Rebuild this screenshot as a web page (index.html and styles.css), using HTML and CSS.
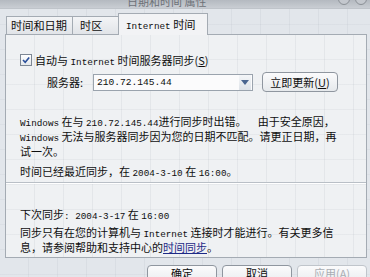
FILE: index.html
```html
<!DOCTYPE html>
<html lang="zh-CN">
<head>
    <meta charset="UTF-8">
    <meta name="viewport" content="width=device-width, initial-scale=1.0">
    <title>日期和时间 属性</title>
    <link rel="stylesheet" href="styles.css">
</head>
<body>
    <div class="window">
        <div class="titlebar">
            <span class="title">日期和时间 属性</span>
            <span class="title-btns">
                <span class="circle"></span>
                <span class="circle"></span>
            </span>
        </div>

        <div class="tabs">
            <div class="tab tab-date">时间和日期</div>
            <div class="tab tab-zone">时区</div>
            <div class="tab tab-active"><span class="en">Internet</span> 时间</div>
        </div>

        <div class="panel">
            <div class="row check-row">
                <span class="checkbox">
                    <svg width="10" height="10" viewBox="0 0 10 10"><path d="M2 5 L4.2 7.3 L8.2 2.4" fill="none" stroke="#2a4f9a" stroke-width="1.6"/></svg>
                </span>
                <span>自动与 <span class="en">Internet</span> 时间服务器同步(<u>S</u>)</span>
            </div>

            <div class="row server-row">
                <span class="label">服务器:</span>
                <div class="combo">
                    <span class="en combo-text">210.72.145.44</span>
                    <span class="combo-arrow">
                        <svg width="8" height="5" viewBox="0 0 8 5"><path d="M0 0 L8 0 L4 5 Z" fill="#4a6590"/></svg>
                    </span>
                </div>
                <button class="btn update-btn">立即更新(<u>U</u>)</button>
            </div>

            <p class="text error-text">
                <span class="en">Windows</span> 在与 <span class="en">210.72.145.44</span>进行同步时出错。<span class="en">&nbsp;&nbsp;</span>由于安全原因，<br>
                <span class="en">Windows</span> 无法与服务器同步因为您的日期不匹配。请更正日期，再<br>
                试一次。
            </p>

            <p class="text last-sync">时间已经最近同步，在 <span class="en">2004-3-10</span> 在 <span class="en">16:00</span>。</p>

            <div class="separator"></div>

            <p class="text next-sync">下次同步<span class="en">: 2004-3-17</span> 在 <span class="en">16:00</span></p>

            <p class="text note">
                同步只有在您的计算机与 <span class="en">Internet</span> 连接时才能进行。有关更多信<br>
                息，请参阅帮助和支持中心的<a href="#" class="link">时间同步</a>。
            </p>
        </div>

        <div class="footer-btns">
            <button class="btn">确定</button>
            <button class="btn">取消</button>
            <button class="btn btn-disabled">应用(A)</button>
        </div>
    </div>
</body>
</html>
```

FILE: styles.css
```css
* {
    box-sizing: border-box;
    margin: 0;
    padding: 0;
}

body {
    width: 370px;
    height: 277px;
    overflow: hidden;
    font-family: "Noto Sans CJK SC", "Liberation Sans", sans-serif;
    font-size: 11px;
    color: #0e0e0e;
    background-color: #e2e6eb;
}

.window {
    height: 277px;
    background-image:
        repeating-linear-gradient(90deg, transparent 0 28px, rgba(110, 120, 135, 0.08) 28px 29px),
        repeating-linear-gradient(180deg, transparent 0 24px, rgba(110, 120, 135, 0.06) 24px 25px);
}

.en {
    font-family: "Liberation Mono", monospace;
    font-size: 9.3px;
}

/* title bar, mostly cut off at the top */
.titlebar {
    display: flex;
    align-items: flex-start;
    height: 9px;
    overflow: hidden;
    background: linear-gradient(#b4b9c0, #c9cdd3);
    border-bottom: 1px solid #bfc4ca;
}

.title {
    margin-top: -5px;
    padding-left: 127px;
    font-size: 11px;
    line-height: 12px;
    color: #6d7177;
}

.title-btns {
    display: flex;
    gap: 5px;
    margin-left: auto;
    margin-right: 3px;
    margin-top: -7px;
}

.circle {
    width: 12px;
    height: 12px;
    border: 1px solid #8b9096;
    border-radius: 50%;
    background: #c4c8ce;
}

/* tabs */
.tabs {
    display: flex;
    align-items: flex-end;
    height: 25px;
    padding-left: 6px;
}

.tab {
    height: 18px;
    padding: 0 4px;
    line-height: 17px;
    font-size: 11.2px;
    white-space: nowrap;
    border: 1px solid #a4abb3;
    border-bottom: none;
    background: linear-gradient(#f3f4f6, #e1e4e8);
    margin-right: -1px;
}

.tab-date {
    width: 67px;
}

.tab-zone {
    width: 47px;
    padding-left: 7px;
}

.tab-active {
    width: 90px;
    height: 22px;
    line-height: 21px;
    padding: 0 0 0 7px;
    background: #f2f3f5;
    position: relative;
    z-index: 1;
    margin-bottom: -1px;
}

/* tab page */
.panel {
    height: 224px;
    margin: 0 3px 0 5px;
    padding: 0 14px;
    border: 1px solid #a4abb3;
    background-color: #eff1f3;
    background-image:
        repeating-linear-gradient(90deg, transparent 0 28px, rgba(110, 120, 135, 0.09) 28px 29px),
        repeating-linear-gradient(180deg, transparent 0 24px, rgba(110, 120, 135, 0.07) 24px 25px);
}

.row {
    display: flex;
    align-items: center;
}

.check-row {
    margin-top: 19px;
    height: 12px;
    gap: 3px;
}

.checkbox {
    display: flex;
    align-items: center;
    justify-content: center;
    width: 12px;
    height: 12px;
    border: 1px solid #7d8794;
    background: linear-gradient(#ffffff, #e4e8ec);
}

.server-row {
    margin-top: 6px;
    height: 20px;
    padding-left: 27px;
}

.label {
    width: 46px;
}

.combo {
    display: flex;
    align-items: center;
    width: 160px;
    height: 17px;
    border: 1px solid #9aa3ad;
    background: #fbfbfc;
}

.combo-text {
    flex: 1;
    padding-left: 3px;
    font-size: 9.6px;
}

.combo-arrow {
    display: flex;
    align-items: center;
    justify-content: center;
    width: 12px;
    height: 15px;
    margin-right: 1px;
    background: linear-gradient(#f4f6f8, #dde2e8);
}

.btn {
    font-family: "Noto Sans CJK SC", "Liberation Sans", sans-serif;
    font-size: 11px;
    line-height: 12px;
    color: #0e0e0e;
    width: 70px;
    height: 22px;
    padding-bottom: 7px;
    border: 1px solid #8f969f;
    border-radius: 4px;
    background: linear-gradient(#fbfbfc, #e6e9ec);
}

.update-btn {
    width: 76px;
    height: 20px;
    padding-bottom: 0;
    margin-left: 9px;
}

.text {
    line-height: 12px;
    white-space: nowrap;
}

.error-text {
    margin-top: 23px;
}

.last-sync {
    margin-top: 8px;
}

.separator {
    margin: 2px -14px 0;
    height: 2px;
    border-top: 1px solid #b9bfc6;
    border-bottom: 1px solid #ffffff;
}

.next-sync {
    margin-top: 24px;
}

.note {
    margin-top: 3px;
}

.link {
    color: #1d2a86;
    text-decoration: underline;
}

.footer-btns {
    display: flex;
    justify-content: flex-end;
    gap: 5px;
    margin-top: 7px;
    padding-right: 3px;
}

.btn-disabled {
    color: #a9adb3;
    border-color: #c0c5cb;
}
```
